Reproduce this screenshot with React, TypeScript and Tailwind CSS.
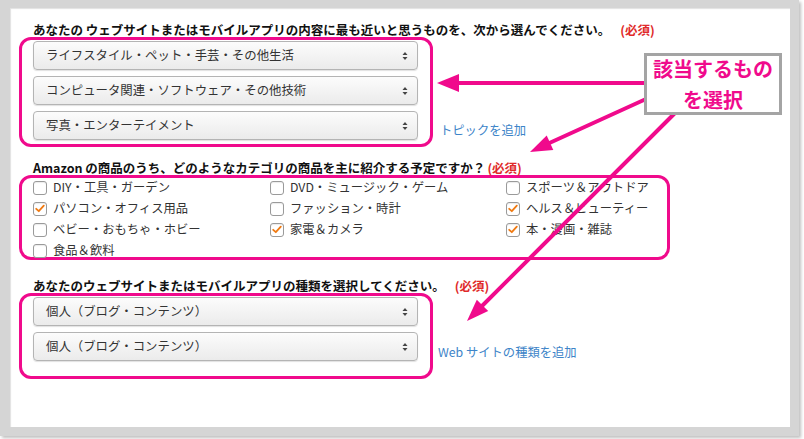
import React from 'react';

const PINK = '#f00a8c';

const topics = [
  'ライフスタイル・ペット・手芸・その他生活',
  'コンピュータ関連・ソフトウェア・その他技術',
  '写真・エンターテイメント',
];

const categories: { label: string; checked: boolean }[] = [
  { label: 'DIY・工具・ガーデン', checked: false },
  { label: 'DVD・ミュージック・ゲーム', checked: false },
  { label: 'スポーツ＆アウトドア', checked: false },
  { label: 'パソコン・オフィス用品', checked: true },
  { label: 'ファッション・時計', checked: false },
  { label: 'ヘルス＆ビューティー', checked: true },
  { label: 'ベビー・おもちゃ・ホビー', checked: false },
  { label: '家電＆カメラ', checked: true },
  { label: '本・漫画・雑誌', checked: true },
  { label: '食品＆飲料', checked: false },
];

function SelectBox({ value }: { value: string }) {
  return (
    <div className="h-[29px] flex items-center justify-between pl-[12px] pr-[9px] rounded-[4px] border border-[#b4b4b4] bg-gradient-to-b from-[#fcfcfc] to-[#ebebeb] shadow-[0_1px_1px_rgba(0,0,0,0.12)]">
      <span className="text-[12.4px] text-[#333]">{value}</span>
      <svg width="6" height="10" viewBox="0 0 6 10" className="shrink-0">
        <path d="M3 1 L5.5 4 H0.5 Z" fill="#444" />
        <path d="M3 9 L5.5 6 H0.5 Z" fill="#444" />
      </svg>
    </div>
  );
}

function Check({ label, checked }: { label: string; checked: boolean }) {
  return (
    <div className="flex items-center h-[21px]">
      <div className="w-[14px] h-[14px] shrink-0 rounded-[3px] border border-[#9a9a9a] bg-white flex items-center justify-center shadow-[inset_0_1px_1px_rgba(0,0,0,0.08)]">
        {checked && (
          <svg width="10" height="9" viewBox="0 0 10 9">
            <path d="M1.2 4.8 L3.8 7.2 L8.8 1.6" fill="none" stroke="#f07a12" strokeWidth="1.8" strokeLinecap="round" strokeLinejoin="round" />
          </svg>
        )}
      </div>
      <span className="ml-[6px] text-[12.3px] text-[#333] whitespace-nowrap">{label}</span>
    </div>
  );
}

function Required({ className = '' }: { className?: string }) {
  return <span className={`text-[#e02a2a] font-bold ${className}`}>(必須)</span>;
}

export default function App() {
  return (
    <div
      className="relative w-[804px] h-[439px] bg-white overflow-hidden"
      style={{ fontFamily: '"Noto Sans CJK JP", "Noto Sans", sans-serif' }}
    >
      {/* gray screenshot frame */}
      <div className="w-[799px] h-[436px] bg-[#d5d5d5] pl-[10px] pt-[8px] pr-[9px] pb-[9px] shadow-[2px_2px_3px_rgba(0,0,0,0.25)]">
        <div className="h-full bg-white pl-[9px] pt-[15px] shadow-[inset_1px_1px_1px_rgba(0,0,0,0.12)]">
          {/* topic */}
          <h2 className="ml-[14px] h-[14px] leading-[14px] text-[12.5px] font-bold text-[#111] whitespace-nowrap">
            あなたの ウェブサイトまたはモバイルアプリの内容に最も近いと思うものを、次から選んでください。
            <Required className="ml-[10px]" />
          </h2>
          <div className="flex items-start">
            <div className="w-[414px] h-[110px] rounded-[12px] border-[3px] pl-[11px] pr-[12px] pt-[1px] flex flex-col gap-[6px]" style={{ borderColor: PINK }}>
              {topics.map((t) => (
                <SelectBox key={t} value={t} />
              ))}
            </div>
            <a className="ml-[7px] mt-[86px] leading-[14px] text-[12.3px] text-[#3d84c8]">トピックを追加</a>
          </div>

          {/* categories */}
          <h2 className="mt-[14px] ml-[14px] h-[14px] leading-[14px] text-[12.5px] font-bold text-[#111] whitespace-nowrap">
            Amazon の商品のうち、どのようなカテゴリの商品を主に紹介する予定ですか？
            <Required className="ml-[2px]" />
          </h2>
          <div className="w-[651px] h-[85px] rounded-[12px] border-[3px] pl-[11px]" style={{ borderColor: PINK }}>
            <div className="-mt-[1px] grid grid-cols-[237px_236px_1fr]">
              {categories.map((c) => (
                <Check key={c.label} label={c.label} checked={c.checked} />
              ))}
            </div>
          </div>

          {/* site type */}
          <h2 className="mt-[19px] ml-[14px] h-[14px] leading-[14px] text-[12.5px] font-bold text-[#111] whitespace-nowrap">
            あなたのウェブサイトまたはモバイルアプリの種類を選択してください。
            <Required className="ml-[10px]" />
          </h2>
          <div className="flex items-start">
            <div className="w-[414px] h-[86px] rounded-[12px] border-[3px] pl-[11px] pr-[12px] pt-[1px] flex flex-col gap-[6px]" style={{ borderColor: PINK }}>
              <SelectBox value="個人（ブログ・コンテンツ）" />
              <SelectBox value="個人（ブログ・コンテンツ）" />
            </div>
            <a className="ml-[5px] mt-[52px] leading-[14px] text-[12.3px] text-[#3d84c8]">Web サイトの種類を追加</a>
          </div>
        </div>
      </div>

      {/* annotation arrows */}
      <svg className="absolute inset-0 pointer-events-none" width="804" height="439" viewBox="0 0 804 439">
        <g fill={PINK} stroke={PINK} strokeWidth="4" strokeLinecap="round">
          <line x1="646" y1="83" x2="452" y2="83" />
          <polygon points="437,83 459,74 459,92" stroke="none" />
          <line x1="646" y1="99" x2="545" y2="145" />
          <polygon points="530,152 553.3,150.1 546.7,135.5" stroke="none" />
          <line x1="676" y1="112" x2="480" y2="308" />
          <polygon points="467,321 488.2,311 476.8,299.8" stroke="none" />
        </g>
      </svg>

      {/* callout */}
      <div className="absolute left-[644px] top-[53px] w-[138px] h-[62px] border-[3px] border-[#a4a4a4] bg-white flex flex-col items-center justify-center">
        <span className="text-[20px] leading-[31px] font-bold whitespace-nowrap" style={{ color: PINK }}>該当するもの</span>
        <span className="text-[20px] leading-[31px] font-bold whitespace-nowrap" style={{ color: PINK }}>を選択</span>
      </div>
    </div>
  );
}
